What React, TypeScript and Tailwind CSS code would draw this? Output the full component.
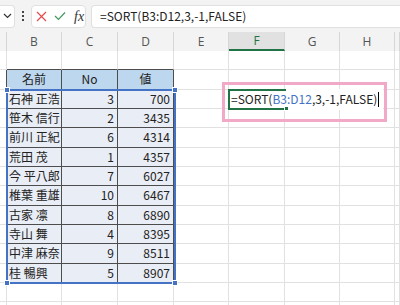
import React from 'react';

const columns = [
  { label: '', w: 'w-[7px]' },
  { label: 'B', w: 'w-[55px]' },
  { label: 'C', w: 'w-[56px]' },
  { label: 'D', w: 'w-[56px]' },
  { label: 'E', w: 'w-[55px]' },
  { label: 'F', w: 'w-[56px]' },
  { label: 'G', w: 'w-[55px]' },
  { label: 'H', w: 'w-[55px]' },
  { label: '', w: 'w-[5px]' },
];

const people: [string, number, number][] = [
  ['石神 正浩', 3, 700],
  ['笹木 信行', 2, 3435],
  ['前川 正紀', 6, 4314],
  ['荒田 茂', 1, 4357],
  ['今 平八郎', 7, 6027],
  ['椎葉 重雄', 10, 6467],
  ['古家 凛', 8, 6890],
  ['寺山 舞', 4, 8395],
  ['中津 麻奈', 9, 8511],
  ['桂 暢興', 5, 8907],
];

const rowNumbers = Array.from({ length: 14 }, (_, i) => i + 1);

function cellClass(r: number, c: number) {
  const inTable = r >= 2 && r <= 12 && c >= 1 && c <= 3;
  const rightDark = inTable || (c === 0 && r >= 2 && r <= 12);
  const bottomDark = inTable || (r === 1 && c >= 1 && c <= 3);
  let cls = 'shrink-0 h-full border-r border-b flex items-center overflow-hidden whitespace-nowrap ';
  cls += rightDark ? 'border-r-[#4d4d4d] ' : 'border-r-[#e1e1e1] ';
  cls += bottomDark ? 'border-b-[#4d4d4d] ' : 'border-b-[#e1e1e1] ';
  if (inTable && r === 2) cls += 'bg-[#bdd7ee] justify-center ';
  else if (inTable) cls += 'bg-[#e9edf5] ';
  else cls += 'bg-white ';
  return cls;
}

function cellContent(r: number, c: number) {
  if (r === 2) {
    if (c === 1) return '名前';
    if (c === 2) return 'No';
    if (c === 3) return '値';
  }
  if (r >= 3 && r <= 12) {
    const p = people[r - 3];
    if (c === 1) return <span className="pl-[2px]">{p[0]}</span>;
    if (c === 2) return <span className="ml-auto pr-[3px]">{p[1]}</span>;
    if (c === 3) return <span className="ml-auto pr-[3px]">{p[2]}</span>;
  }
  return null;
}

function FormulaBar() {
  return (
    <div className="h-[32px] bg-[#f3f3f3] flex items-center gap-[5px] pr-0">
      <div className="h-[23px] w-[15px] bg-white border border-[#e0e0e0] border-l-0 rounded-r-[4px] flex items-center justify-center">
        <svg width="9" height="6" viewBox="0 0 9 6">
          <path d="M1 1l3.5 3.5L8 1" fill="none" stroke="#333" strokeWidth="1.2" />
        </svg>
      </div>
      <div className="w-[6px] flex flex-col items-center gap-[2px]">
        <span className="w-[2px] h-[2px] bg-[#444]" />
        <span className="w-[2px] h-[2px] bg-[#444]" />
        <span className="w-[2px] h-[2px] bg-[#444]" />
      </div>
      <div className="h-[23px] w-[55px] bg-white border border-[#e0e0e0] rounded-[4px] flex items-center pl-[4px] gap-[7px]">
        <svg width="11" height="11" viewBox="0 0 11 11">
          <path d="M1 1l9 9M10 1l-9 9" stroke="#e3494f" strokeWidth="1.2" />
        </svg>
        <svg width="12" height="10" viewBox="0 0 12 10">
          <path d="M1 5l3.5 3.5L11 1.5" fill="none" stroke="#3f9b5b" strokeWidth="1.2" />
        </svg>
        <span className="text-[14px] italic text-[#333] ml-[1px]" style={{ fontFamily: '"Liberation Serif", serif' }}>
          fx
        </span>
      </div>
      <div className="h-[23px] flex-1 bg-white border border-[#e0e0e0] border-r-0 rounded-l-[4px] flex items-center pl-[8px] text-[12px] text-[#222]">
        =SORT(B3:D12,3,-1,FALSE)
      </div>
    </div>
  );
}

export default function App() {
  return (
    <div
      className="w-[400px] h-[305px] overflow-hidden bg-white text-[12px] text-[#222]"
      style={{ fontFamily: '"Noto Sans CJK JP", "Noto Sans", sans-serif' }}
    >
      <FormulaBar />
      <div className="relative">
        {/* column headers */}
        <div className="flex h-[19px] bg-[#f3f3f3]">
          {columns.map((col, c) => (
            <div
              key={c}
              className={
                'shrink-0 h-full flex items-center justify-center border-r border-[#d6d6d6] text-[12px] ' +
                col.w +
                (col.label === 'F'
                  ? ' bg-[#e1e1e1] border-b-2 border-b-[#217346] text-[#217346]'
                  : ' text-[#555]')
              }
              style={{ fontFamily: '"Open Sans", sans-serif' }}
            >
              {col.label}
            </div>
          ))}
        </div>

        {/* rows */}
        {rowNumbers.map((r) => (
          <div key={r} className="flex h-[19.33px]">
            {columns.map((col, c) => (
              <div key={c} className={cellClass(r, c) + col.w}>
                {cellContent(r, c)}
              </div>
            ))}
          </div>
        ))}

        {/* reference range highlight B3:D12 */}
        <div className="absolute left-[6px] top-[56.7px] w-[170px] h-[195.3px] border-2 border-[#4472c4] pointer-events-none">
          <span className="absolute -left-[4px] -top-[4px] w-[6px] h-[6px] bg-[#4472c4] border border-white" />
          <span className="absolute -right-[4px] -top-[4px] w-[6px] h-[6px] bg-[#4472c4] border border-white" />
          <span className="absolute -left-[4px] -bottom-[4px] w-[6px] h-[6px] bg-[#4472c4] border border-white" />
          <span className="absolute -right-[4px] -bottom-[4px] w-[6px] h-[6px] bg-[#4472c4] border border-white" />
        </div>

        {/* editing cell F3 */}
        <div className="absolute left-[228px] top-[56.7px] w-[155px] h-[21.3px] bg-white flex items-center pl-[3px] text-[12px] text-[#222] whitespace-nowrap">
          <span>=SORT(</span>
          <span className="text-[#4472c4]">B3:D12</span>
          <span>,3,-1,FALSE)</span>
          <span className="ml-[1px] w-[1px] h-[15px] bg-black" />
        </div>
        <div className="absolute left-[228px] top-[56.7px] w-[58px] h-[21.3px] border-2 border-r-0 border-[#217346] pointer-events-none">
          <span className="absolute -right-[3px] -bottom-[3px] w-[5px] h-[5px] bg-[#217346] border border-white" />
        </div>

        {/* annotation box */}
        <div className="absolute left-[222px] top-[50px] w-[165px] h-[40px] border-[3px] border-[#f2a9c8] pointer-events-none" />
      </div>
    </div>
  );
}
